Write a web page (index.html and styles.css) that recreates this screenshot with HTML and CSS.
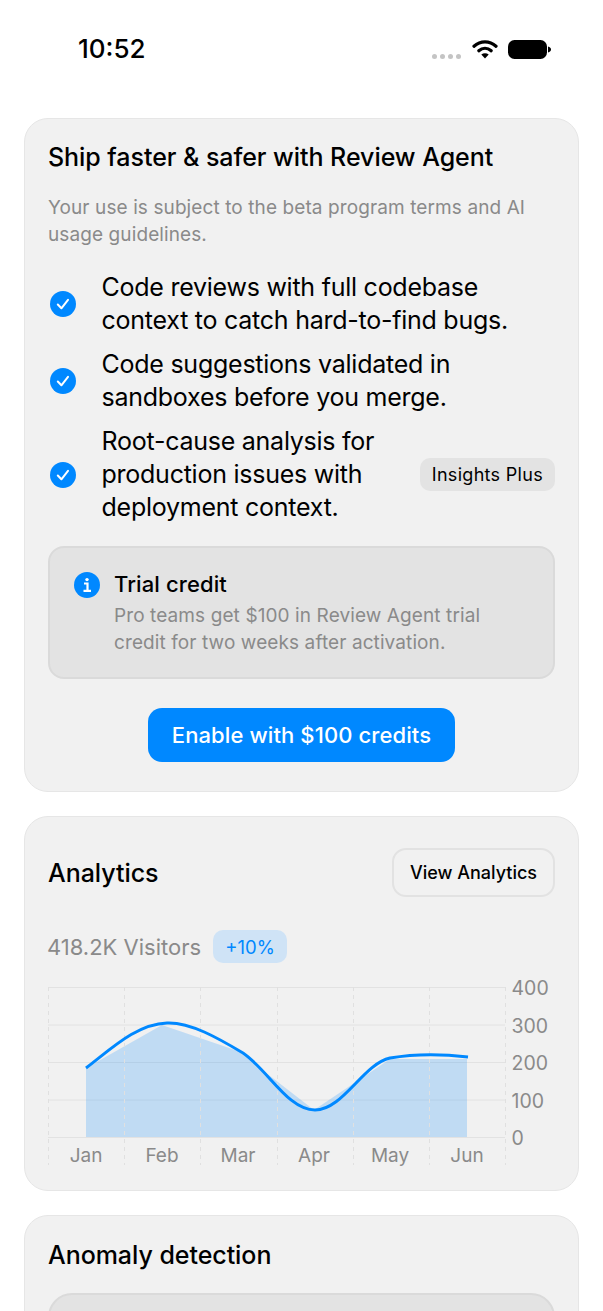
FILE: index.html
```html
<!DOCTYPE html>
<html lang="en">
<head>
<meta charset="utf-8">
<title>Review Agent</title>
<link rel="stylesheet" href="styles.css">
</head>
<body>
<div class="screen">
  <header class="status">
    <span class="time">10:52</span>
    <div class="status-icons">
      <div class="dots"><i></i><i></i><i></i><i></i></div>
      <svg class="wifi" width="26" height="20" viewBox="0 0 26 20"><path d="M2 7.2C8.500 1.300 17.500 1.300 24 7.200" fill="none" stroke="#000" stroke-width="3.200" stroke-linecap="round"/><path d="M6.800 11.800C10.500 8.500 15.500 8.500 19.200 11.800" fill="none" stroke="#000" stroke-width="3.200" stroke-linecap="round"/><path d="M13 19.500L9.300 15.500C11.500 13.700 14.500 13.700 16.700 15.500Z" fill="#000"/></svg>
      <svg class="battery" width="43" height="19" viewBox="0 0 43 19"><rect x="0" y="0" width="39" height="19" rx="6.500" fill="#000"/><path d="M40 6.500C42 7 43 8.200 43 9.500C43 10.800 42 12 40 12.500Z" fill="#000"/></svg>
    </div>
  </header>

  <main class="cards">
    <section class="card promo">
      <h2 class="title">Ship faster &amp; safer with Review Agent</h2>
      <p class="terms">Your use is subject to the beta program terms and AI usage guidelines.</p>
      <ul class="features">
        <li class="feature">
          <svg class="check" width="26" height="26" viewBox="0 0 26 26"><circle cx="13" cy="13" r="13" fill="#0088ff"/><path d="M7.800 13.500L11.400 17.300L18 8.800" fill="none" stroke="#fff" stroke-width="2" stroke-linecap="round" stroke-linejoin="round"/></svg>
          <span class="feature-text">Code reviews with full codebase context to catch hard-to-find bugs.</span>
        </li>
        <li class="feature">
          <svg class="check" width="26" height="26" viewBox="0 0 26 26"><circle cx="13" cy="13" r="13" fill="#0088ff"/><path d="M7.800 13.500L11.400 17.300L18 8.800" fill="none" stroke="#fff" stroke-width="2" stroke-linecap="round" stroke-linejoin="round"/></svg>
          <span class="feature-text">Code suggestions validated in sandboxes before you merge.</span>
        </li>
        <li class="feature">
          <svg class="check" width="26" height="26" viewBox="0 0 26 26"><circle cx="13" cy="13" r="13" fill="#0088ff"/><path d="M7.800 13.500L11.400 17.300L18 8.800" fill="none" stroke="#fff" stroke-width="2" stroke-linecap="round" stroke-linejoin="round"/></svg>
          <span class="feature-text narrow">Root-cause analysis for production issues with deployment context.</span>
          <span class="tag">Insights Plus</span>
        </li>
      </ul>
      <div class="notice">
        <svg class="info" width="26" height="26" viewBox="0 0 26 26"><circle cx="13" cy="13" r="13" fill="#0088ff"/><circle cx="13" cy="7.600" r="1.700" fill="#fff"/><path d="M10 11.500H13.500V18.500M9.500 18.800H17" fill="none" stroke="#fff" stroke-width="2.200"/></svg>
        <div class="notice-body">
          <h3 class="notice-title">Trial credit</h3>
          <p class="notice-text">Pro teams get $100 in Review Agent trial credit for two weeks after activation.</p>
        </div>
      </div>
      <div class="cta-row"><button class="cta">Enable with $100 credits</button></div>
    </section>

    <section class="card analytics">
      <div class="card-head">
        <h2 class="title">Analytics</h2>
        <button class="ghost">View Analytics</button>
      </div>
      <div class="stat">
        <span class="visitors">418.2K Visitors</span>
        <span class="delta">+10%</span>
      </div>
      <svg class="chart" width="506" height="204" viewBox="0 0 506 204">
        <g class="grid-h">
          <line x1="0" x2="457" y1="9.500" y2="9.500"/>
          <line x1="0" x2="457" y1="47" y2="47"/>
          <line x1="0" x2="457" y1="84.500" y2="84.500"/>
          <line x1="0" x2="457" y1="122" y2="122"/>
          <line x1="0" x2="457" y1="159.500" y2="159.500"/>
        </g>
        <path class="area" d="M38 90L114 47L190 73L266 132L342 81L419 81V159H38Z"/>
        <g class="grid-v">
          <line x1="0.500" x2="0.500" y1="9" y2="187"/>
          <line x1="76.500" x2="76.500" y1="9" y2="187"/>
          <line x1="152.500" x2="152.500" y1="9" y2="187"/>
          <line x1="229.500" x2="229.500" y1="9" y2="187"/>
          <line x1="305.500" x2="305.500" y1="9" y2="187"/>
          <line x1="381.500" x2="381.500" y1="9" y2="187"/>
          <line x1="457.500" x2="457.500" y1="9" y2="187"/>
        </g>
        <path class="line" d="M38 90C62 72 88 46 119 45C142 44 170 60 195 75C220 92 240 132 267 132C295 132 315 86 342 80C365 76 395 76 420 79"/>
        <g class="y-labels">
          <text x="463.500" y="17">400</text>
          <text x="463.500" y="54.500">300</text>
          <text x="463.500" y="92">200</text>
          <text x="463.500" y="129.500">100</text>
          <text x="463.500" y="167">0</text>
        </g>
        <g class="x-labels">
          <text x="38" y="184">Jan</text>
          <text x="114" y="184">Feb</text>
          <text x="190" y="184">Mar</text>
          <text x="266" y="184">Apr</text>
          <text x="342" y="184">May</text>
          <text x="419" y="184">Jun</text>
        </g>
      </svg>
    </section>

    <section class="card anomaly">
      <h2 class="title">Anomaly detection</h2>
      <div class="anomaly-box"></div>
    </section>
  </main>
</div>
</body>
</html>
```
FILE: styles.css
```css
* { box-sizing: border-box; }
html, body {
  margin: 0;
  height: 1311px;
  overflow: hidden;
  background: #fff;
}
body {
  font-family: Inter, "Liberation Sans", sans-serif;
  color: #000;
}
.screen { width: 603px; height: 1311px; overflow: hidden; }

.status {
  height: 118px;
  padding: 32px 52px 0 78px;
  display: flex;
  justify-content: space-between;
  align-items: flex-start;
}
.time { font-size: 26px; line-height: 34px; font-weight: 500; }
.status-icons { display: flex; align-items: flex-start; gap: 10px; padding-top: 8px; }
.dots { display: flex; gap: 3px; padding-top: 14px; margin-right: 1px; }
.dots i { width: 5px; height: 5px; border-radius: 50%; background: #c4c4c4; }
.wifi { margin-top: -1px; }
.battery { margin-top: 0; }

.cards { padding: 0 24px; display: flex; flex-direction: column; gap: 24px; }
.card {
  background: #f1f1f1;
  border: 1.500px solid #e6e6e6;
  border-radius: 24px;
  padding: 0 23px;
}
.promo { height: 674px; padding-top: 21px; }
.analytics { height: 375px; padding-top: 31px; }
.anomaly { height: 200px; padding-top: 22px; }

.title { margin: 0; font-size: 25px; line-height: 34px; font-weight: 500; letter-spacing: -0.050px; }
.terms { margin: 20px 0 0; font-size: 19px; line-height: 27px; letter-spacing: 0.100px; color: #8a8a8a; }

.features { list-style: none; margin: 23px 0 0; padding: 0; display: flex; flex-direction: column; gap: 11px; }
.feature { display: flex; align-items: center; }
.check { flex: none; margin: 0 26px 0 2px; }
.feature-text { font-size: 25px; line-height: 33px; font-weight: 400; letter-spacing: -0.250px; max-width: 420px; margin-left: -0.500px; }
.feature-text.narrow { flex: none; width: 305px; }
.tag {
  margin-left: auto;
  background: #e3e3e3;
  border-radius: 10px;
  height: 33px;
  padding: 0 12px;
  display: flex;
  align-items: center;
  font-size: 18px;
  letter-spacing: 0.300px;
  white-space: nowrap;
}

.notice {
  margin-top: 22px;
  height: 133px;
  background: #e3e3e3;
  border: 2px solid #dadada;
  border-radius: 16px;
  padding: 22px 24px;
  display: flex;
  gap: 14px;
}
.info { flex: none; margin-top: 2px; }
.notice-title { margin: 0; font-size: 22px; line-height: 28px; font-weight: 500; letter-spacing: 0.100px; }
.notice-text { margin: 4px 0 0; font-size: 19px; line-height: 27px; letter-spacing: 0.100px; color: #8a8a8a; }

.cta-row { display: flex; justify-content: center; margin-top: 29px; }
.cta {
  width: 307px;
  height: 54px;
  border: 0;
  border-radius: 14px;
  background: #0088ff;
  color: #fff;
  font: 500 22px Inter, "Liberation Sans", sans-serif;
  letter-spacing: 0.100px;
}

.card-head { display: flex; justify-content: space-between; align-items: center; }
.ghost {
  width: 163px;
  height: 49px;
  background: #f1f1f1;
  border: 2px solid #e2e2e2;
  border-radius: 14px;
  font: 500 18px Inter, "Liberation Sans", sans-serif;
  color: #000;
}
.stat { display: flex; align-items: center; gap: 12px; margin-top: 33px; height: 33px; }
.visitors { font-size: 22px; color: #8a8a8a; margin-left: -1px; }
.delta {
  width: 74px;
  height: 33px;
  border-radius: 10px;
  background: #cfe3f6;
  color: #0088ff;
  font-size: 18.500px;
  display: flex;
  align-items: center;
  justify-content: center;
}
.chart { display: block; margin-top: 15px; overflow: visible; }
.grid-h line { stroke: #e2e2e2; stroke-width: 1; }
.grid-v line { stroke: #e0e0e0; stroke-width: 1; stroke-dasharray: 4 4; }
.area { fill: #0088ff; fill-opacity: 0.2; }
.line { fill: none; stroke: #0088ff; stroke-width: 3; }
.y-labels text { font-size: 19.500px; fill: #8a8a8a; }
.x-labels text { font-size: 19px; fill: #8a8a8a; text-anchor: middle; }

.anomaly-box {
  margin-top: 21px;
  height: 120px;
  background: #e3e3e3;
  border: 2px solid #dadada;
  border-radius: 24px;
}
```
